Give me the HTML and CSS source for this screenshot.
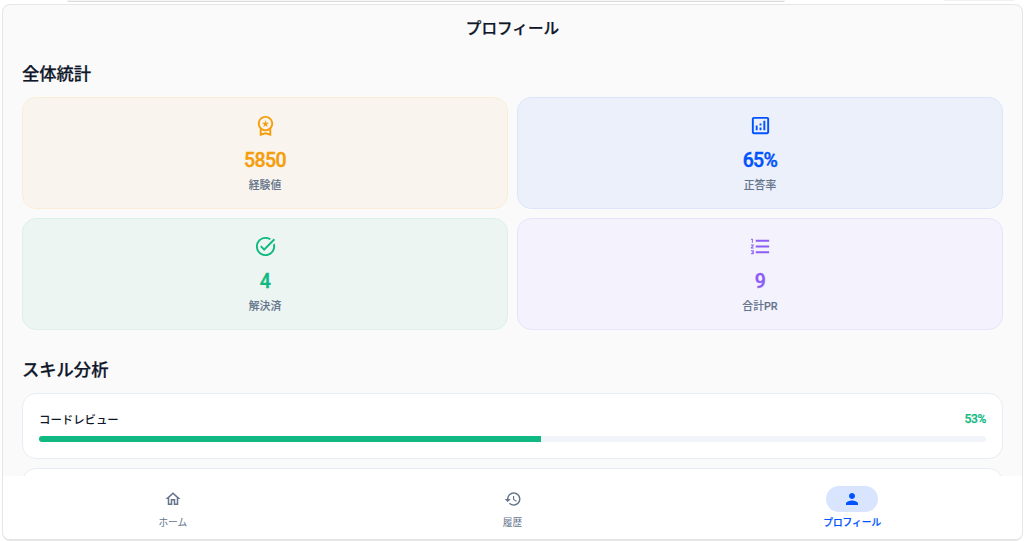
FILE: index.html
```
<!DOCTYPE html>
<html lang="ja">
<head>
  <meta charset="UTF-8" />
  <meta name="viewport" content="width=device-width, initial-scale=1.0"/>
  <title>プロフィール</title>
  <link rel="stylesheet" href="styles.css">
</head>
<body>
  <div class="topbar">
    <div class="topbar-field"></div>
    <div class="topbar-button"></div>
  </div>

  <div class="app">
    <header class="header">
      <h1>プロフィール</h1>
    </header>

    <main class="content">
      <h2>全体統計</h2>
      <div class="stats">
        <div class="stat stat-xp">
          <svg class="stat-icon" viewBox="0 0 24 24"><path d="M9.68 13.69L12 11.93l2.31 1.76-.88-2.85L15.75 9h-2.84L12 6.19 11.09 9H8.25l2.31 1.84-.88 2.85zM20 10c0-4.42-3.58-8-8-8s-8 3.58-8 8c0 2.03.76 3.87 2 5.28V23l6-2 6 2v-7.72c1.24-1.41 2-3.25 2-5.28zm-8-6c3.31 0 6 2.69 6 6s-2.69 6-6 6-6-2.69-6-6 2.69-6 6-6zm0 15l-4 1.02v-3.1c1.18.68 2.54 1.08 4 1.08s2.82-.4 4-1.08v3.1L12 19z"/></svg>
          <div class="stat-value">5850</div>
          <div class="stat-label">経験値</div>
        </div>
        <div class="stat stat-rate">
          <svg class="stat-icon" viewBox="0 0 24 24"><path d="M19 3H5c-1.1 0-2 .9-2 2v14c0 1.1.9 2 2 2h14c1.1 0 2-.9 2-2V5c0-1.1-.9-2-2-2zm0 16H5V5h14v14zM7 12h2v5H7zm8-5h2v10h-2zm-4 7h2v3h-2zm0-4h2v2h-2z"/></svg>
          <div class="stat-value">65%</div>
          <div class="stat-label">正答率</div>
        </div>
        <div class="stat stat-solved">
          <svg class="stat-icon" viewBox="0 0 24 24"><path d="M22 5.18L10.59 16.6l-4.24-4.24 1.41-1.41 2.83 2.83 10-10L22 5.18zm-2.21 5.04c.13.57.21 1.17.21 1.78 0 4.42-3.58 8-8 8s-8-3.58-8-8 3.58-8 8-8c1.58 0 3.04.46 4.28 1.25l1.44-1.44C16.1 2.67 14.13 2 12 2 6.48 2 2 6.48 2 12s4.48 10 10 10 10-4.48 10-10c0-1.19-.22-2.33-.6-3.39l-1.61 1.61z"/></svg>
          <div class="stat-value">4</div>
          <div class="stat-label">解決済</div>
        </div>
        <div class="stat stat-total">
          <svg class="stat-icon" viewBox="0 0 24 24"><path d="M2 17h2v.5H3v1h1v.5H2v1h3v-4H2v1zm1-9h1V4H2v1h1v3zm-1 3h1.8L2 13.1v.9h3v-1H3.2L5 10.9V10H2v1zm5-6v2h14V5H7zm0 14h14v-2H7v2zm0-6h14v-2H7v2z"/></svg>
          <div class="stat-value">9</div>
          <div class="stat-label">合計PR</div>
        </div>
      </div>

      <h2>スキル分析</h2>
      <div class="skills">
        <div class="skill">
          <div class="skill-head">
            <span class="skill-name">コードレビュー</span>
            <span class="skill-score">53%</span>
          </div>
          <div class="bar"><div class="bar-fill" style="width: 53%"></div></div>
        </div>
        <div class="skill"></div>
      </div>
    </main>

    <nav class="nav">
      <a class="nav-item">
        <span class="nav-icon"><svg viewBox="0 0 24 24"><path d="M12 5.69l5 4.5V18h-2v-6H9v6H7v-7.81l5-4.5M12 3L2 12h3v8h6v-6h2v6h6v-8h3L12 3z"/></svg></span>
        <span>ホーム</span>
      </a>
      <a class="nav-item">
        <span class="nav-icon"><svg viewBox="0 0 24 24"><path d="M13 3c-4.97 0-9 4.03-9 9H1l3.89 3.89.07.14L9 12H6c0-3.87 3.13-7 7-7s7 3.13 7 7-3.13 7-7 7c-1.93 0-3.68-.79-4.94-2.06l-1.42 1.42C8.27 19.99 10.51 21 13 21c4.97 0 9-4.03 9-9s-4.03-9-9-9zm-1 5v5l4.28 2.54.72-1.21-3.5-2.08V8H12z"/></svg></span>
        <span>履歴</span>
      </a>
      <a class="nav-item active">
        <span class="nav-icon"><svg viewBox="0 0 24 24"><path d="M12 12c2.21 0 4-1.79 4-4s-1.79-4-4-4-4 1.79-4 4 1.79 4 4 4zm0 2c-2.67 0-8 1.34-8 4v2h16v-2c0-2.66-5.33-4-8-4z"/></svg></span>
        <span>プロフィール</span>
      </a>
    </nav>
  </div>
</body>
</html>
```
FILE: styles.css
```
:root {
  --bg: #fafafa;
  --text: #0f172a;
  --muted: #64748b;
  --border: #e8edf5;
  --blue: #0052ff;
  --green: #10b981;
  --amber: #f59e0b;
  --purple: #8b5cf6;
}

* {
  box-sizing: border-box;
  margin: 0;
  padding: 0;
}

body {
  height: 100vh;
  overflow: hidden;
  display: flex;
  flex-direction: column;
  font-family: Roboto, 'Noto Sans CJK JP', sans-serif;
  background: #fff;
  color: var(--text);
}

svg {
  display: block;
  fill: currentColor;
}

/* Bottom edge of the browser toolbar */
.topbar {
  flex: none;
  display: flex;
  justify-content: space-between;
  align-items: flex-start;
  height: 4px;
  padding: 0 10px 0 67px;
}

.topbar-field {
  width: 718px;
  height: 2px;
  background: #f6f6f6;
  border-bottom: 1px solid #dcdcdc;
  border-radius: 0 0 4px 4px;
}

.topbar-button {
  width: 70px;
  height: 1px;
  background: #f1f1f1;
}

.app {
  display: flex;
  flex-direction: column;
  width: 1021px;
  height: 537px;
  margin-left: 2px;
  background: var(--bg);
  border: 1px solid #e6e6e6;
  border-bottom: 2px solid #e6e6e6;
  border-radius: 8px;
  overflow: hidden;
}

.header {
  flex: none;
  height: 47px;
  display: flex;
  align-items: center;
  justify-content: center;
}

h1 {
  font-size: 15.6px;
  font-weight: 500;
  line-height: 24px;
  -webkit-text-stroke: 0.25px;
}

.content {
  flex: 1;
  min-height: 0;
  overflow: hidden;
  padding: 9px 19px 0;
}

h2 {
  font-size: 17.3px;
  font-weight: 500;
  line-height: 26px;
  margin-bottom: 10px;
  -webkit-text-stroke: 0.25px;
}

.stats {
  display: grid;
  grid-template-columns: 1fr 1fr;
  gap: 9px;
  margin-bottom: 27px;
}

.stat {
  height: 112px;
  padding-top: 16px;
  display: flex;
  flex-direction: column;
  align-items: center;
  border: 1px solid;
  border-radius: 14px;
}

.stat-icon {
  width: 23px;
  height: 23px;
}

.stat-value {
  margin-top: 11px;
  font-size: 19.5px;
  font-weight: 500;
  line-height: 26px;
  letter-spacing: -0.6px;
  -webkit-text-stroke: 0.4px;
}

.stat-label {
  margin-top: 4px;
  font-size: 10.8px;
  font-weight: 500;
  line-height: 16px;
  color: var(--muted);
  -webkit-text-stroke: 0.1px;
}

.stat-xp {
  color: var(--amber);
  background: #f9f4ed;
  border-color: #fbecd6;
}

.stat-rate {
  color: var(--blue);
  background: #ecf0fa;
  border-color: #dce5fb;
}

.stat-solved {
  color: var(--green);
  background: #ecf5f2;
  border-color: #dcf0e9;
}

.stat-total {
  color: var(--purple);
  background: #f4f2fc;
  border-color: #e8e3fb;
}

.skills {
  display: flex;
  flex-direction: column;
  gap: 9px;
}

.skill {
  height: 66px;
  padding: 16px;
  background: #fff;
  border: 1px solid var(--border);
  border-radius: 14px;
}

.skill-head {
  display: flex;
  justify-content: space-between;
  align-items: center;
  height: 18px;
  margin-bottom: 8px;
  font-size: 11.4px;
  font-weight: 500;
}

.skill-score {
  color: var(--green);
  font-size: 12px;
  letter-spacing: -0.3px;
  -webkit-text-stroke: 0.25px;
}

.bar {
  height: 6px;
  background: #f1f5f9;
  border-radius: 3px;
  overflow: hidden;
}

.bar-fill {
  height: 100%;
  background: var(--green);
}

.nav {
  flex: none;
  display: flex;
  height: 63px;
  padding-top: 10px;
  background: #fff;
}

.nav-item {
  flex: 1;
  display: flex;
  flex-direction: column;
  align-items: center;
  font-size: 9.7px;
  line-height: 14px;
  color: var(--muted);
}

.nav-icon {
  display: flex;
  align-items: center;
  justify-content: center;
  width: 52px;
  height: 26px;
  margin-bottom: 4px;
  border-radius: 13px;
}

.nav-icon svg {
  width: 18px;
  height: 18px;
}

.nav-item.active {
  color: var(--blue);
  font-weight: 500;
  -webkit-text-stroke: 0.2px;
}

.active .nav-icon {
  background: #d9e4ff;
}
```
